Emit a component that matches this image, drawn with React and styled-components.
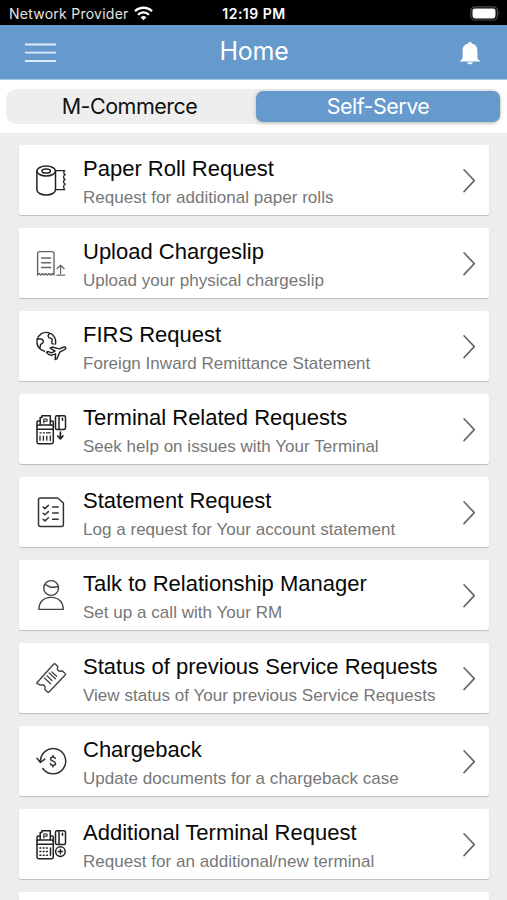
import React, { useState } from "react";
import styled, { createGlobalStyle } from "styled-components";

const GlobalStyle = createGlobalStyle`
  * {
    box-sizing: border-box;
  }

  body {
    margin: 0;
    background: #ededed;
  }
`;

const Screen = styled.div`
  width: 507px;
  height: 900px;
  overflow: hidden;
  display: flex;
  flex-direction: column;
  background: #ededed;
  font-family: "Liberation Sans", Arial, sans-serif;
`;

const StatusBar = styled.div`
  flex: none;
  height: 25px;
  padding: 2px 6px 0 9px;
  display: grid;
  grid-template-columns: 1fr auto 1fr;
  align-items: center;
  background: #000;
  color: #fff;
  font-family: Inter, sans-serif;
  font-size: 14px;
`;

const Carrier = styled.div`
  display: flex;
  align-items: center;
  gap: 5px;
  color: #e4e4e4;
  letter-spacing: 0.25px;
  white-space: nowrap;
`;

const Clock = styled.div`
  padding-right: 2px;
  font-weight: 600;
  font-size: 14px;
  letter-spacing: 0.5px;
`;

const BatterySlot = styled.div`
  display: flex;
  justify-content: flex-end;
`;

const Header = styled.header`
  flex: none;
  height: 55px;
  padding: 0 26px 0 25px;
  display: grid;
  grid-template-columns: 1fr auto 1fr;
  align-items: center;
  background: #6699cc;
  border-bottom: 1px solid #a9cbea;
`;

const HeaderTitle = styled.h1`
  margin: 0;
  padding: 0 0 2px 2px;
  color: #fff;
  font-family: Inter, sans-serif;
  font-size: 25px;
  font-weight: 400;
  letter-spacing: -0.3px;
`;

const IconButton = styled.button`
  display: flex;
  justify-self: ${(props) => (props.$end ? "end" : "start")};
  padding: 1px 0 0;
  border: none;
  background: none;
  color: #fff;
  cursor: pointer;
`;

const TabBar = styled.div`
  flex: none;
  height: 53px;
  padding: 9px 6px;
  background: #fff;
`;

const TabTrack = styled.div`
  height: 35px;
  padding: 2px 1px 2px 0;
  display: grid;
  grid-template-columns: 250px 1fr;
  background: #eee;
  border-radius: 10px;
`;

const Tab = styled.button`
  padding: 0 ${(props) => (props.$active ? 0 : 3)}px 1px 0;
  border: none;
  border-radius: 7px;
  background: ${(props) => (props.$active ? "#6699cc" : "transparent")};
  color: ${(props) => (props.$active ? "#fff" : "#111")};
  box-shadow: ${(props) =>
    props.$active ? "0 1px 4px rgba(0, 0, 0, 0.22)" : "none"};
  font-family: Inter, sans-serif;
  font-size: 21.5px;
  letter-spacing: -0.5px;
  cursor: pointer;
`;

const List = styled.div`
  flex: 1;
  min-height: 0;
  overflow: hidden;
  padding: 12px 18px 0 19px;
  display: flex;
  flex-direction: column;
  gap: 13px;
`;

const Card = styled.div`
  flex: none;
  height: 70px;
  padding: 0 12px 0 16px;
  display: grid;
  grid-template-columns: 32px 1fr 16px;
  column-gap: 16px;
  align-items: center;
  background: #fff;
  border-radius: 2px;
  box-shadow: 0 1px 1px rgba(0, 0, 0, 0.2);
`;

const CardText = styled.div`
  min-width: 0;
  padding-top: 6px;
  white-space: nowrap;
`;

const CardTitle = styled.div`
  color: #080808;
  font-size: 22px;
  line-height: 28px;
`;

const CardSubtitle = styled.div`
  color: #777;
  font-size: 17px;
  line-height: 29px;
  letter-spacing: 0.03px;
`;

const Glyph = styled.svg`
  display: block;
  fill: none;
  stroke: ${(props) => props.$tone || "#333"};
  stroke-width: ${(props) => props.$weight || 1.5};
  stroke-linecap: round;
  stroke-linejoin: round;
`;

const LineIcon = ({ children, ...rest }) => (
  <Glyph width="32" height="32" viewBox="0 0 32 32" {...rest}>
    {children}
  </Glyph>
);

const PaperRollIcon = () => (
  <LineIcon $tone="#222">
    <ellipse cx="11.2" cy="7" rx="9.3" ry="5" />
    <ellipse cx="11.2" cy="7" rx="4.2" ry="2.1" />
    <path d="M1.9 7v19c0 2.7 4.2 5 9.3 5s9.3-2.3 9.3-5V7" />
    <path
      d="M20.5 6.6h9.3c-1.6 1.5-1.4 3.1.4 4-2.2 1.2-2.2 3.4-.2 4.800-2 1.300-2 3.500.2 4.700-2 1.200-2 3.600-.5 5.600h-9.200"
      strokeWidth="1.3"
    />
  </LineIcon>
);

const UploadIcon = () => (
  <LineIcon $tone="#666" $weight="1.4">
    <path d="M2.6 28V6.5q0-1.9 1.9-1.9h12.6q1.9 0 1.9 1.9V28l-1.7-1.4-1.6 1.4-1.6-1.4-1.7 1.4-1.6-1.4L9.2 28l-1.6-1.4L5.9 28l-1.6-1.4z" />
    <path d="M6.6 11h9M6.6 15.8h9M6.6 20.5h9" />
    <path d="M25.6 26.500v-8M22 21.700l3.600-3.400 3.600 3.400M21.900 28.100h7.800" strokeWidth="1.200" />
  </LineIcon>
);

const GlobePlaneIcon = () => (
  <LineIcon $tone="#222" $weight="1.4">
    <path d="M20.600 14A9.500 9.500 0 1 0 9.500 21.200" />
    <path d="M2.200 9h3.600c2 .3 3 1.700 2.300 3.500-.5 1.300-2.300 1.200-2.600 2.500l-.7 3" />
    <path d="M14.600 3.700c-1.600 1-2 2.500-.8 3.800 1 .9 2.500.3 3.200 1.600.8 1.500-.7 2.400-.3 3.700.3.800 1.300 1.200 2.200 1.300" />
    <path d="M11.400 22.300l1.600-.9 3.300 1.500 3.700-1.800-4.800-3 1.900-1.100 7.200 1.900 3.200-1.400c1.600-.7 3-.4 3.300.2.300.8-.7 1.800-2.200 2.500l-3.600 1.700-3.200 7-1.700.6.500-5.700-3.700 1.300c-2 .7-3.600-.4-5.500-2.800z" />
  </LineIcon>
);

const TerminalBase = ({ children }) => (
  <>
    <rect x="2" y="12" width="16.300" height="18.800" rx="1.700" />
    <path d="M2 16.300h16.300M2 13V9.200q0-1.200 1.200-1.200h2M18.300 13V9.200q0-1.200-1.200-1.200h-1.400" />
    <path d="M5.200 11.500V4.500h1.700V2.700h8.400v8.800" />
    <path d="M8.800 10V6h3.200v2.200H9.600" strokeWidth="1.100" />
    {children}
    <rect x="20.500" y="2.700" width="10" height="13.800" rx="1.500" />
    <path d="M24 2.700v13.800M27.500 5.200v2" />
  </>
);

const TerminalDownIcon = () => (
  <LineIcon $tone="#222">
    <TerminalBase>
      <path
        d="M5 19.800h1.200M8.400 19.800h1.200M11.600 19.800h3.600M5 23.200v4M8.400 23.200v4M11.800 23.200v4M15.300 22.800v4.600"
        strokeWidth="1.300"
      />
    </TerminalBase>
    <path d="M25.400 19v6.400M22.800 23l2.600 2.800L28 23" strokeWidth="1.700" />
  </LineIcon>
);

const TerminalAddIcon = () => (
  <LineIcon $tone="#222">
    <TerminalBase>
      <path
        d="M4.900 20h8M4.900 23.600h8M4.900 27.200h8"
        strokeDasharray="0.900 2.400"
        strokeWidth="1.500"
      />
      <path d="M15.500 20v7.200" />
    </TerminalBase>
    <circle cx="25.400" cy="23.600" r="4.800" />
    <path d="M25.400 21.500v4.200M23.300 23.600h4.200" />
  </LineIcon>
);

const ChecklistIcon = () => (
  <LineIcon>
    <path d="M5.5 2h17.200l5.700 5v21.500q0 2-2 2H5.500q-2 0-2-2V4q0-2 2-2z" />
    <path d="M8.200 11l1.700 1.600 3.500-3.200M8.200 17.200l1.700 1.600 3.500-3.200M8.200 23.300l1.700 1.600 3.500-3.200" />
    <path d="M17.600 11h5.600M17.600 17.100h5.600M17.600 23.300h5.600" />
  </LineIcon>
);

const PersonIcon = () => (
  <LineIcon $tone="#444" $weight="1.4">
    <circle cx="16.100" cy="9" r="7.400" />
    <path d="M9.600 5.600c3.200 0 3.400 2.700 7.500 2.700 2.500 0 3.500-.6 6.200-.7" />
    <path d="M3.900 30.400c0-7 4.400-12 12.200-12s12.100 5 12.100 12z" />
  </LineIcon>
);

const TicketIcon = () => (
  <LineIcon $tone="#444" $weight="1.400">
    <path d="M2.100 20.500 18.800 2q.7-.8 1.500 0l2.500 2.400c-1.500 3.200 1.200 6 4.300 4.400l3 2.700q.8.700.1 1.500L14 30q-.8.700-1.500 0l-2.700-2.500c1.400-3.100-1.200-5.800-4.300-4.400l-3.300-1.500q-.7-.5-.1-1.100z" />
    <path d="M9.400 16l6.200 5.700M12 13.800l5 4.700M14.200 11l6.200 5.800M17 10l4.600 4.300" strokeWidth="1.300" />
  </LineIcon>
);

const ChargebackIcon = () => (
  <LineIcon $tone="#333">
    <path d="M5.500 17A12.600 12.600 0 1 1 7.800 23.500M2 13.300l3.400 4.200 4.400-3.400" />
    <path d="M20.300 13.400c-.5-1-1.300-1.400-2.500-1.400-1.300 0-2.200.8-2.200 1.900 0 2.800 4.900 1.700 4.900 4.500 0 1.200-1 2-2.500 2-1.300 0-2.300-.6-2.600-1.700M18 10.500V12M18 20.600V22" />
  </LineIcon>
);

const Chevron = () => (
  <Glyph width="16" height="26" viewBox="0 0 16 26" $tone="#666" $weight="1.6">
    <path d="M3 2.800 13.300 13.600 3 24.600" />
  </Glyph>
);

const WifiIcon = () => (
  <svg width="19" height="15" viewBox="0 0 19 15" fill="none" stroke="#fff">
    <path d="M1 5.2a12.2 12.2 0 0 1 17 0" strokeWidth="2.3" />
    <path d="M4 8.7a7.8 7.8 0 0 1 11 0" strokeWidth="2.3" />
    <path d="M6.6 11.3a4.2 4.2 0 0 1 5.8 0L9.5 14.2z" fill="#fff" stroke="none" />
  </svg>
);

const BatteryIcon = () => (
  <svg width="31" height="15" viewBox="0 0 31 15">
    <rect x="0.8" y="0.8" width="26.6" height="13.2" rx="4" fill="none" stroke="#4c4c4c" strokeWidth="1.2" />
    <rect x="2.5" y="2.4" width="23" height="10" rx="2.4" fill="#fff" />
    <path d="M28.7 5.2q1.7 2.2 0 4.6z" fill="#5c5c5c" />
  </svg>
);

const MenuIcon = () => (
  <svg width="31" height="20" viewBox="0 0 31 20" stroke="#dcedff" strokeWidth="1.8">
    <path d="M0 1.5h31M0 9.7h31M0 18h31" />
  </svg>
);

const BellIcon = () => (
  <svg width="22" height="24" viewBox="0 0 22 26" preserveAspectRatio="none" fill="currentColor">
    <path d="M11 1c1.100 0 1.700.7 1.800 1.800 3.900.9 5.600 4 5.600 8v6.400c0 2 .9 3.200 2.700 4.200v.9H.9v-.9c1.800-1 2.700-2.200 2.700-4.200v-6.400c0-4 1.700-7.100 5.600-8C9.300 1.700 9.900 1 11 1z" />
    <path d="M8.100 23h5.800c-.4 1.500-1.500 2.200-2.900 2.200S8.500 24.500 8.100 23z" />
  </svg>
);

const services = [
  { title: "Paper Roll Request", subtitle: "Request for additional paper rolls", Icon: PaperRollIcon },
  { title: "Upload Chargeslip", subtitle: "Upload your physical chargeslip", Icon: UploadIcon },
  { title: "FIRS Request", subtitle: "Foreign Inward Remittance Statement", Icon: GlobePlaneIcon },
  { title: "Terminal Related Requests", subtitle: "Seek help on issues with Your Terminal", Icon: TerminalDownIcon },
  { title: "Statement Request", subtitle: "Log a request for Your account statement", Icon: ChecklistIcon },
  { title: "Talk to Relationship Manager", subtitle: "Set up a call with Your RM", Icon: PersonIcon },
  { title: "Status of previous Service Requests", subtitle: "View status of Your previous Service Requests", Icon: TicketIcon },
  { title: "Chargeback", subtitle: "Update documents for a chargeback case", Icon: ChargebackIcon },
  { title: "Additional Terminal Request", subtitle: "Request for an additional/new terminal", Icon: TerminalAddIcon },
];

const tabs = ["M-Commerce", "Self-Serve"];

export default function App() {
  const [activeTab, setActiveTab] = useState("Self-Serve");

  return (
    <Screen>
      <GlobalStyle />
      <StatusBar>
        <Carrier>
          Network Provider
          <WifiIcon />
        </Carrier>
        <Clock>12:19 PM</Clock>
        <BatterySlot>
          <BatteryIcon />
        </BatterySlot>
      </StatusBar>
      <Header>
        <IconButton aria-label="Menu">
          <MenuIcon />
        </IconButton>
        <HeaderTitle>Home</HeaderTitle>
        <IconButton $end aria-label="Notifications">
          <BellIcon />
        </IconButton>
      </Header>
      <TabBar>
        <TabTrack>
          {tabs.map((tab) => (
            <Tab
              key={tab}
              $active={tab === activeTab}
              onClick={() => setActiveTab(tab)}
            >
              {tab}
            </Tab>
          ))}
        </TabTrack>
      </TabBar>
      <List>
        {services.map(({ title, subtitle, Icon }) => (
          <Card key={title}>
            <Icon />
            <CardText>
              <CardTitle>{title}</CardTitle>
              <CardSubtitle>{subtitle}</CardSubtitle>
            </CardText>
            <Chevron />
          </Card>
        ))}
        <Card />
      </List>
    </Screen>
  );
}
